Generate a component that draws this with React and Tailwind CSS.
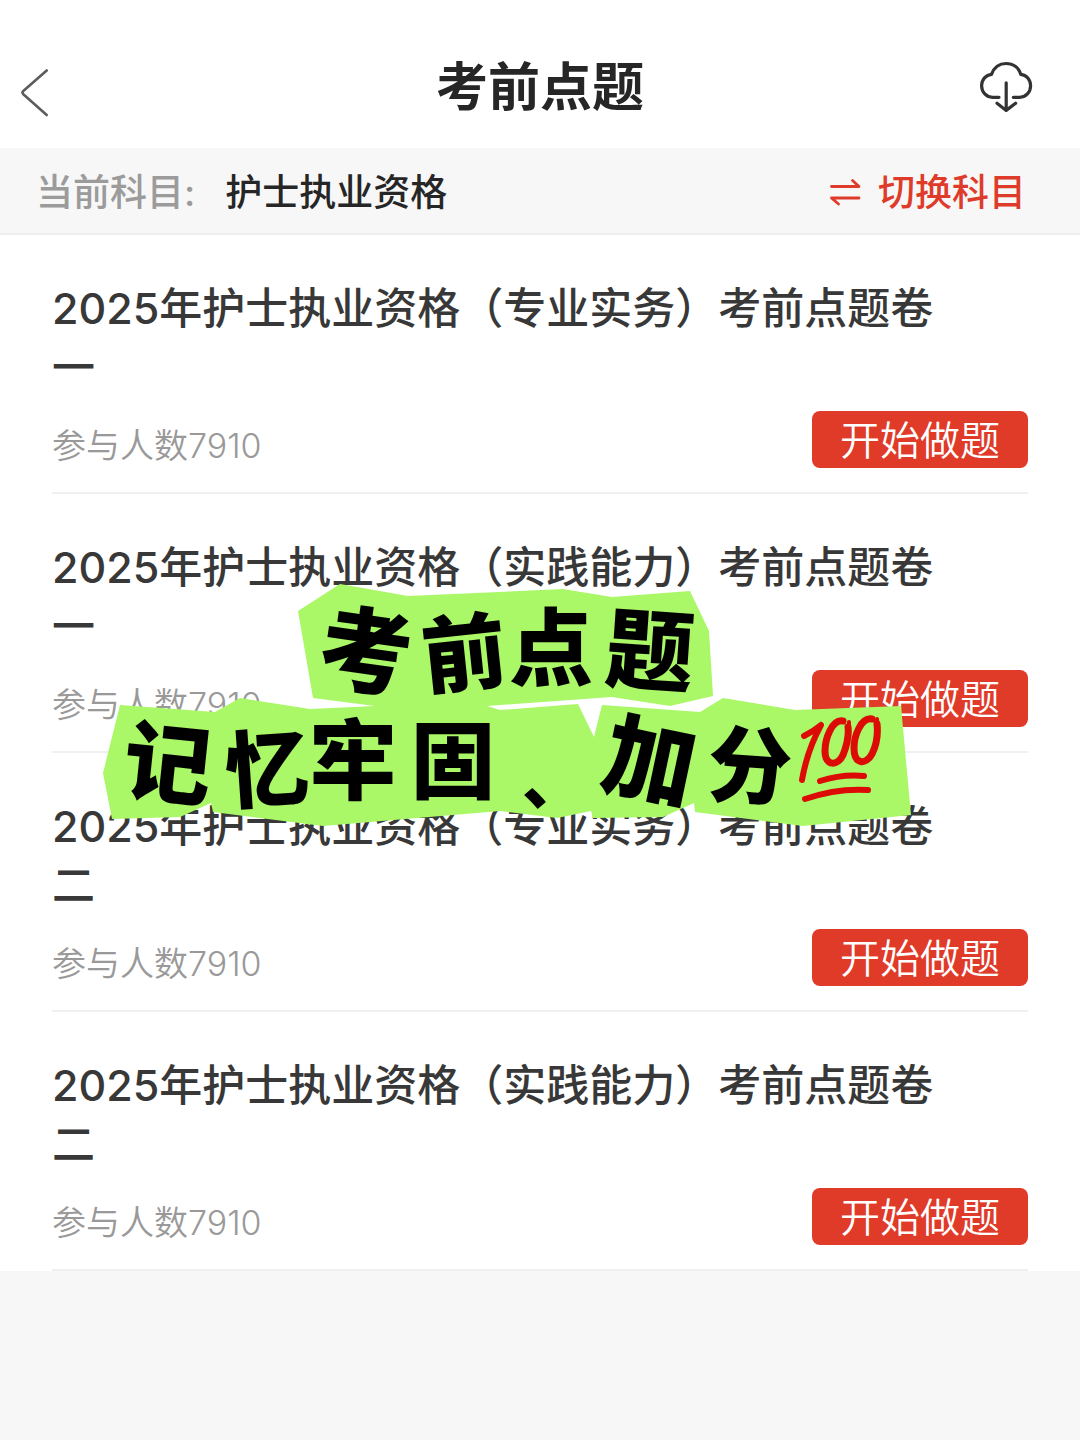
const papers = [
  { id: 1, title: '2025年护士执业资格（专业实务）考前点题卷一', count: 7910 },
  { id: 2, title: '2025年护士执业资格（实践能力）考前点题卷一', count: 7910 },
  { id: 3, title: '2025年护士执业资格（专业实务）考前点题卷二', count: 7910 },
  { id: 4, title: '2025年护士执业资格（实践能力）考前点题卷二', count: 7910 },
];

// centre, size and tilt of every cut-out character on the sticker
const stickerChars = [
  { char: '考', x: 366, y: 650, size: 92, tilt: 8 },
  { char: '前', x: 464, y: 652, size: 84, tilt: -6 },
  { char: '点', x: 551, y: 647, size: 84, tilt: 0 },
  { char: '题', x: 650, y: 650, size: 88, tilt: 4 },
  { char: '记', x: 168, y: 763, size: 88, tilt: 6 },
  { char: '忆', x: 267, y: 768, size: 84, tilt: -4 },
  { char: '牢', x: 353, y: 759, size: 88, tilt: 0 },
  { char: '固', x: 453, y: 760, size: 84, tilt: 0 },
  { char: '、', x: 554, y: 780, size: 64, tilt: 0 },
  { char: '加', x: 650, y: 760, size: 92, tilt: 12 },
  { char: '分', x: 750, y: 765, size: 84, tilt: 4 },
];

function BackIcon() {
  return (
    <svg className="h-12 w-7" viewBox="0 0 28 48" fill="none" stroke="#5c5c5c" strokeWidth="2.6" strokeLinecap="round" strokeLinejoin="round">
      <path d="M26.700 1.500 3.300 22Q1.700 23.600 3.300 25.200L26.700 46" />
    </svg>
  );
}

function CloudDownloadIcon() {
  return (
    <svg className="h-13 w-14" viewBox="2 0 56 52" fill="none" stroke="#333" strokeWidth="3.2" strokeLinecap="round" strokeLinejoin="round">
      <path d="M21 37.300H14.500C8.500 37.300 3.600 32.200 3.600 25.800C3.600 19.600 8 14.800 13.500 14.400C16 7.500 21.500 3.500 28.200 3.500C35 3.500 40.600 7.500 42.800 14.400C48.500 14.900 52.600 19.800 52.600 25.800C52.600 32.200 47.800 37.300 41.600 37.300H35.300" />
      <path d="M28.200 22.800V50M19 43.300 28.200 50.400 37.600 43.300" />
    </svg>
  );
}

function SwitchIcon() {
  return (
    <svg className="h-8 w-8" viewBox="0 0 32 32" fill="none" stroke="#df3b2a" strokeWidth="2.800" strokeLinecap="round" strokeLinejoin="round">
      <path d="M1.500 9.500H29L22.500 3.500M29 21H1.500L8.500 27" />
    </svg>
  );
}

function Sticker() {
  return (
    <svg
      className="pointer-events-none absolute inset-x-0 top-[540px] w-full"
      viewBox="0 540 1080 340"
      role="img"
      aria-label="考前点题 记忆牢固、加分💯"
    >
      <path
        fill="#aaf768"
        d="M298 611 340 584 408 596 563 589 612 597 690 591 709 631 713 696 670 706 612 697 487 706 500 710 578 704 594 737 602 705 700 712 723 698 795 710 901 706 911 815 803 826 695 812 694 803 663 817 593 818 591 811 557 818 500 811 323 826 213 812 211 803 180 817 112 819 103 773 120 705 215 712 240 698 310 709 375 706 313 698Z"
      />
      {stickerChars.map(({ char, x, y, size, tilt }) => (
        <text
          key={char}
          x={x}
          y={y + Math.round(size * 0.38)}
          fontSize={size}
          textAnchor="middle"
          transform={`rotate(${tilt} ${x} ${y})`}
          className="fill-black font-['Noto_Sans_CJK_SC',sans-serif] font-black"
        >
          {char}
        </text>
      ))}
      <g fill="none" stroke="#dc0b05" strokeWidth="7" strokeLinecap="round" strokeLinejoin="round">
        <path strokeWidth="6" d="M804 736Q814 731 821 725Q807 751 802 780" />
        <path d="M843 721C832 719 825 739 825 751C825 767 838 766 843 755C847 745 849 735 848 727" />
        <path strokeWidth="4" d="M849 732V722" />
        <path d="M872 719C861 717 854 736 854 748C854 765 866 765 872 754C877 744 878 733 877 724" />
        <path strokeWidth="4" d="M878 730 877 719" />
        <path strokeWidth="6" d="M820 781Q842 774 864 776" />
        <path strokeWidth="6" d="M805 799Q837 788 868 790" />
      </g>
    </svg>
  );
}

function PaperItem({ paper }) {
  return (
    <li className="border-b-2 border-[#f0f0f0] pt-11 pb-6">
      <h2 className="pr-20 text-[43px] leading-[59px] font-[450] text-[#383838]">{paper.title}</h2>
      <div className="mt-3.5 flex items-end justify-between">
        <p className="text-[34px] leading-[44px] font-[350] text-[#999]">参与人数{paper.count}</p>
        <button type="button" className="rounded-lg bg-[#e03a29] px-7 pt-0.5 text-[40px] leading-[55px] font-[350] text-white">
          开始做题
        </button>
      </div>
    </li>
  );
}

export default function App() {
  return (
    <div className="relative min-h-screen bg-[#f7f7f7] font-[Inter,'Noto_Sans_CJK_SC',sans-serif]">
      <header className="flex items-center justify-between bg-white px-5 pt-6">
        <button type="button" aria-label="返回" className="flex h-31 w-20 items-center pt-3.5">
          <BackIcon />
        </button>
        <h1 className="pt-1 text-[52px] leading-[120px] font-bold text-[#262626]">考前点题</h1>
        <button type="button" aria-label="下载" className="flex h-31 w-20 items-center">
          <CloudDownloadIcon />
        </button>
      </header>

      <div className="flex items-center border-b-2 border-[#eee] pt-1 pr-[54px] pl-9 text-[37px] leading-[81px] font-[450]">
        <span className="text-[#9b9b9b]">当前科目:</span>
        <span className="ml-[30px] text-[#262626]">护士执业资格</span>
        <button type="button" className="ml-auto flex items-center gap-4 text-[#df3b2a]">
          <SwitchIcon />
          切换科目
        </button>
      </div>

      <main className="bg-white px-13">
        <ul>
          {papers.map((paper) => (
            <PaperItem key={paper.id} paper={paper} />
          ))}
        </ul>
      </main>

      <Sticker />
    </div>
  );
}
